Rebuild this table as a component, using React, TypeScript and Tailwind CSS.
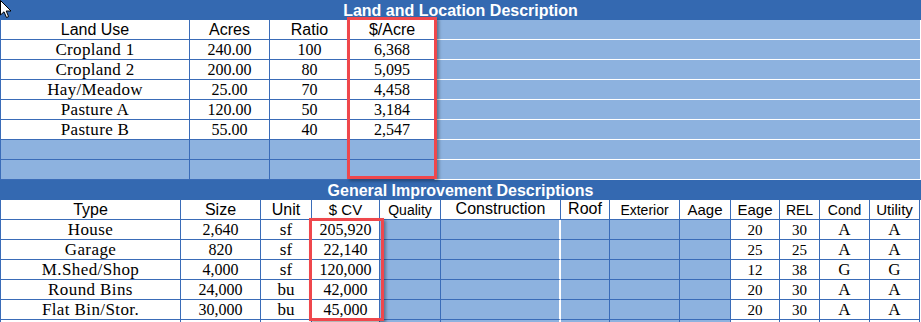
import React from "react";

const sans = { fontFamily: '"Liberation Sans", Arial, sans-serif' };
const serif = { fontFamily: '"Liberation Serif", "Times New Roman", serif' };

type LandRow = [string, string, string, string];
const land: LandRow[] = [
  ["Cropland 1", "240.00", "100", "6,368"],
  ["Cropland 2", "200.00", "80", "5,095"],
  ["Hay/Meadow", "25.00", "70", "4,458"],
  ["Pasture A", "120.00", "50", "3,184"],
  ["Pasture B", "55.00", "40", "2,547"],
];

type ImpRow = [string, string, string, string, string, string, string, string];
const imps: ImpRow[] = [
  ["House", "2,640", "sf", "205,920", "20", "30", "A", "A"],
  ["Garage", "820", "sf", "22,140", "25", "25", "A", "A"],
  ["M.Shed/Shop", "4,000", "sf", "120,000", "12", "38", "G", "G"],
  ["Round Bins", "24,000", "bu", "42,000", "20", "30", "A", "A"],
  ["Flat Bin/Stor.", "30,000", "bu", "45,000", "20", "30", "A", "A"],
  ["", "", "", "", "", "", "", ""],
];

const cell =
  "h-[20px] shrink-0 box-border border-r border-b border-[#3a6cb8] flex items-center justify-center leading-[20px] whitespace-nowrap overflow-hidden text-black";
const blueCell = "bg-[#8db2df]";
const wide =
  "h-[20px] w-[486px] shrink-0 box-border border-r border-b border-white bg-[#8db2df]";

function Band({ title }: { title: string }) {
  return (
    <div
      className="h-[20px] bg-[#3469b1] text-white font-bold text-[16px] leading-[21px] text-center"
      style={sans}
    >
      {title}
    </div>
  );
}

export default function App() {
  return (
    <div className="relative w-[921px] h-[322px] overflow-hidden bg-white">
      <Band title="Land and Location Description" />
      {/* Land table */}
      <div className="border-l border-[#3a6cb8]">
        <div className="flex" style={sans}>
          <div className={`${cell} w-[189px] text-[16px]`}>Land Use</div>
          <div className={`${cell} w-[80px] text-[16px]`}>Acres</div>
          <div className={`${cell} w-[80px] text-[16px]`}>Ratio</div>
          <div className={`${cell} w-[85px] text-[16px]`}>$/Acre</div>
          <div className={wide} />
        </div>
        {land.map((r, i) => (
          <div key={i} className="flex text-[16px]" style={serif}>
            <div className={`${cell} w-[189px] text-[17px] tracking-[0.3px]`}>{r[0]}</div>
            <div className={`${cell} w-[80px]`}>{r[1]}</div>
            <div className={`${cell} w-[80px]`}>{r[2]}</div>
            <div className={`${cell} w-[85px]`}>{r[3]}</div>
            <div className={wide} />
          </div>
        ))}
        {[0, 1].map((i) => (
          <div key={i} className="flex">
            <div className={`${cell} ${blueCell} w-[189px]`} />
            <div className={`${cell} ${blueCell} w-[80px]`} />
            <div className={`${cell} ${blueCell} w-[80px]`} />
            <div className={`${cell} ${blueCell} w-[85px] border-r-white`} />
            <div className={wide} />
          </div>
        ))}
      </div>

      <Band title="General Improvement Descriptions" />
      {/* Improvement table */}
      <div className="border-l border-[#3a6cb8]">
        <div className="flex" style={sans}>
          <div className={`${cell} w-[180px] text-[16px]`}>Type</div>
          <div className={`${cell} w-[80px] text-[16px]`}>Size</div>
          <div className={`${cell} w-[51px] text-[16px]`}>Unit</div>
          <div className={`${cell} w-[68px] text-[15px]`}>$ CV</div>
          <div className={`${cell} w-[61px] text-[14px] items-end`}>
            <span className="leading-[18px]">Quality</span>
          </div>
          <div className={`${cell} w-[120px] text-[16px] items-start`}>
            <span className="leading-[17px]">Construction</span>
          </div>
          <div className={`${cell} w-[49px] text-[16px] items-start`}>
            <span className="leading-[17px]">Roof</span>
          </div>
          <div className={`${cell} w-[70px] text-[14px] items-end`}>
            <span className="leading-[18px]">Exterior</span>
          </div>
          <div className={`${cell} w-[51px] text-[15px] items-end`}>
            <span className="leading-[18px]">Aage</span>
          </div>
          <div className={`${cell} w-[49px] text-[15px] items-end`}>
            <span className="leading-[18px]">Eage</span>
          </div>
          <div className={`${cell} w-[40px] text-[14px] items-end`}>
            <span className="leading-[18px]">REL</span>
          </div>
          <div className={`${cell} w-[50px] text-[14px] items-end`}>
            <span className="leading-[18px]">Cond</span>
          </div>
          <div className={`${cell} w-[50px] text-[15px] items-end`}>
            <span className="leading-[18px]">Utility</span>
          </div>
        </div>
        {imps.map((r, i) => (
          <div key={i} className="flex text-[16px]" style={serif}>
            <div className={`${cell} w-[180px] text-[17px] tracking-[0.4px]`}>{r[0]}</div>
            <div className={`${cell} w-[80px]`}>{r[1]}</div>
            <div className={`${cell} w-[51px] text-[17px]`}>{r[2]}</div>
            <div className={`${cell} w-[68px]`}>{r[3]}</div>
            <div className={`${cell} ${blueCell} w-[61px]`} />
            <div className={`${cell} ${blueCell} w-[120px] border-r-2 border-r-white`} />
            <div className={`${cell} ${blueCell} w-[49px]`} />
            <div className={`${cell} ${blueCell} w-[70px]`} />
            <div className={`${cell} ${blueCell} w-[51px]`} />
            <div className={`${cell} w-[49px] text-[15px]`}>{r[4]}</div>
            <div className={`${cell} w-[40px] text-[15px]`}>{r[5]}</div>
            <div className={`${cell} w-[50px] text-[17px]`}>{r[6]}</div>
            <div className={`${cell} w-[50px] text-[17px]`}>{r[7]}</div>
          </div>
        ))}
      </div>

      {/* Red highlight boxes */}
      <div className="absolute left-[347px] top-[17px] w-[90px] h-[162px] border-[3px] border-[#ef474c] shadow-[2px_2px_3px_rgba(0,0,0,0.35)] pointer-events-none" />
      <div className="absolute left-[309px] top-[218px] w-[75px] h-[103px] border-[3px] border-[#ef474c] shadow-[2px_2px_3px_rgba(0,0,0,0.35)] pointer-events-none" />

      {/* Mouse cursor */}
      <svg
        className="absolute left-0 top-0"
        width="12"
        height="19"
        viewBox="0 0 12 19"
      >
        <path
          d="M0.5 0.5 L0.5 15 L4 11.8 L6.5 17.5 L8.6 16.6 L6.2 11 L11 11 Z"
          fill="white"
          stroke="black"
          strokeWidth="1"
          strokeLinejoin="miter"
        />
      </svg>
    </div>
  );
}
